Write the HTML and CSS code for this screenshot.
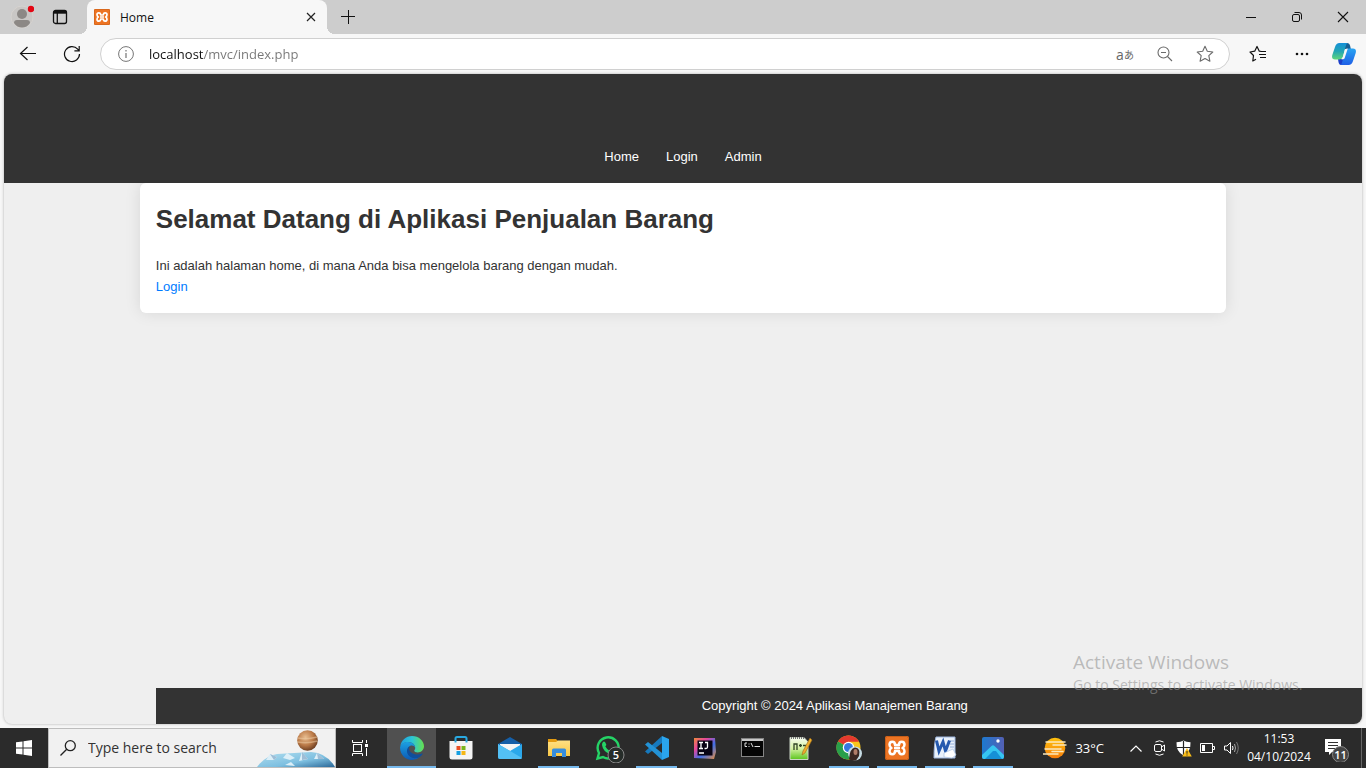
FILE: index.html
```html
<!DOCTYPE html>
<html lang="id">
<head>
<meta charset="utf-8">
<meta name="viewport" content="width=device-width, initial-scale=1">
<title>Home</title>
<link rel="stylesheet" href="styles.css">
</head>
<body>
<svg class="defs" aria-hidden="true">
  <defs>
    <linearGradient id="edgeTop" x1="0" y1="0" x2="1" y2="0"><stop offset="0" stop-color="#1f9fe0"/><stop offset=".5" stop-color="#2cc5d6"/><stop offset="1" stop-color="#66e04e"/></linearGradient>
    <linearGradient id="edgeBlue" x1="0" y1="0" x2="0" y2="1"><stop offset="0" stop-color="#1ba0e2"/><stop offset="1" stop-color="#0d5ab5"/></linearGradient>
    <linearGradient id="copA" x1="0" y1="0" x2="0" y2="1"><stop offset="0" stop-color="#1590d8"/><stop offset=".5" stop-color="#22a5b4"/><stop offset="1" stop-color="#5fd67a"/></linearGradient>
    <linearGradient id="copB" x1="0" y1="0" x2="0" y2="1"><stop offset="0" stop-color="#28a4f2"/><stop offset="1" stop-color="#1f5fe6"/></linearGradient>
    <radialGradient id="planet" cx=".4" cy=".35" r=".7"><stop offset="0" stop-color="#e8bd90"/><stop offset=".55" stop-color="#bb7a48"/><stop offset="1" stop-color="#63371d"/></radialGradient>
    <linearGradient id="ice" x1="0" y1="0" x2="1" y2="1"><stop offset="0" stop-color="#b4e0f0"/><stop offset=".6" stop-color="#7dbfe0"/><stop offset="1" stop-color="#2a6797"/></linearGradient>
    <linearGradient id="ij" x1="0" y1="0" x2="1" y2="1"><stop offset="0" stop-color="#f08a3c"/><stop offset=".3" stop-color="#e6479c"/><stop offset=".6" stop-color="#3f6fe8"/><stop offset="1" stop-color="#e88d3d"/></linearGradient>
    <linearGradient id="sun" x1="0" y1="0" x2="0" y2="1"><stop offset="0" stop-color="#ffc20e"/><stop offset="1" stop-color="#f57c0a"/></linearGradient>
    <linearGradient id="photo" x1="0" y1="0" x2="1" y2="0"><stop offset="0" stop-color="#1d79cf"/><stop offset="1" stop-color="#5360b4"/></linearGradient>
    <linearGradient id="npp" x1="0" y1="0" x2="0" y2="1"><stop offset="0" stop-color="#f8fcf2"/><stop offset=".5" stop-color="#d4f2a2"/><stop offset="1" stop-color="#5cc51e"/></linearGradient>
    <linearGradient id="folder" x1="0" y1="0" x2="0" y2="1"><stop offset="0" stop-color="#ffe083"/><stop offset="1" stop-color="#f9c846"/></linearGradient>
    <symbol id="xampp" viewBox="0 0 24 24">
      <rect width="24" height="24" rx="2" fill="#ed7423"/><rect x=".5" y=".5" width="23" height="23" rx="2" fill="none" stroke="#c95f18"/>
      <path d="M12 9H10Q10 5.800 7.300 5.800Q4.500 5.800 4.500 8.800Q4.500 11 6.500 12Q4.500 13 4.500 15.200Q4.500 18.200 7.300 18.200Q10 18.200 10 15H14Q14 18.200 16.700 18.200Q19.500 18.200 19.500 15.200Q19.500 13 17.500 12Q19.500 11 19.500 8.800Q19.500 5.800 16.700 5.800Q14 5.800 14 9ZM9 12H15" fill="none" stroke="#fff" stroke-width="2.500" stroke-linejoin="round"/>
    </symbol>
  </defs>
</svg>

<div class="tabstrip">
  <button class="profile" aria-label="Profile">
    <svg width="24" height="24" viewBox="0 0 24 24"><circle cx="12" cy="12" r="11" fill="#c9c7c5" stroke="#d6d3d0"/><circle cx="12" cy="9" r="5" fill="#8c8885"/><path d="M4 18Q4 15 7 15H17Q20 15 20 18Q17 22.500 12 22.500T4 18Z" fill="#8c8885"/><circle cx="21" cy="4" r="3.200" fill="#e30613"/></svg>
  </button>
  <button class="tab-menu" aria-label="Tab actions">
    <svg width="16" height="16" viewBox="0 0 16 16" fill="none" stroke="#111" stroke-width="1.300"><rect x="1.500" y="1.500" width="13" height="13" rx="2"/><path d="M1.500 3.300H14.500" stroke-width="2.800"/><path d="M5.300 4V14.500"/></svg>
  </button>
  <div class="tab">
    <svg width="16" height="16"><use href="#xampp"/></svg>
    <span class="tab-title">Home</span>
    <button class="tab-close" aria-label="Close tab"><svg width="10" height="10" viewBox="0 0 10 10"><path d="M1 1L9 9M9 1L1 9" stroke="#222" stroke-width="1.200"/></svg></button>
  </div>
  <button class="new-tab" aria-label="New tab"><svg width="14" height="14" viewBox="0 0 14 14"><path d="M0 6.500H14M7.500 0V14" stroke="#111"/></svg></button>
  <div class="window-buttons">
    <button aria-label="Minimize"><svg width="10" height="10" viewBox="0 0 10 10"><path d="M0 5.500H10" stroke="#111"/></svg></button>
    <button aria-label="Restore"><svg width="10" height="10" viewBox="0 0 10 10" fill="none" stroke="#111"><rect x=".5" y="2.500" width="7" height="7" rx="1.500"/><path d="M2.500 .5H7Q9.500 .5 9.500 3V7.500"/></svg></button>
    <button aria-label="Close"><svg width="12" height="12" viewBox="0 0 12 12"><path d="M1 1L11 11M11 1L1 11" stroke="#111" stroke-width="1.100"/></svg></button>
  </div>
</div>

<div class="toolbar">
  <button aria-label="Back"><svg width="18" height="16" viewBox="0 0 18 16" fill="none" stroke="#111" stroke-width="1.200"><path d="M17 7.500H1.500M8.500 1L1.500 7.500L8.500 14"/></svg></button>
  <button aria-label="Refresh"><svg width="18" height="18" viewBox="0 0 18 18" fill="none" stroke="#111" stroke-width="1.200"><path d="M16.500 9A7.500 7.500 0 1 1 14.700 4.200L16 5.600M16.200 1V5.800H11.400"/></svg></button>
  <form class="address">
    <svg width="16" height="16" viewBox="0 0 16 16" fill="none" stroke="#757575"><circle cx="8" cy="8" r="7.400"/><path d="M8 7V12M8 4V5.500" stroke-width="1.200"/></svg>
    <input class="url" type="text" aria-label="Address" value="localhost/mvc/index.php">
    <button type="button" class="translate" aria-label="Translate">a<span>あ</span></button>
    <button type="button" aria-label="Zoom out"><svg width="16" height="16" viewBox="0 0 16 16" fill="none" stroke="#6b6b6b" stroke-width="1.100"><circle cx="6.500" cy="6.500" r="5.500"/><path d="M10.500 10.500L15 15M4 6.500H9"/></svg></button>
    <button type="button" aria-label="Add to favorites"><svg width="18" height="18" viewBox="0 0 18 18" fill="none" stroke="#6b6b6b" stroke-width="1.100" stroke-linejoin="round"><path d="M9 1.300L11.300 6.300L16.800 7L12.800 10.700L13.900 16.200L9 13.500L4.100 16.200L5.200 10.700L1.200 7L6.700 6.300Z"/></svg></button>
  </form>
  <button aria-label="Favorites"><svg width="18" height="18" viewBox="0 0 18 18" fill="none" stroke="#111" stroke-width="1.200" stroke-linejoin="round"><path d="M12.500 6.500L10.300 6.200L8 1.500L5.700 6.200L1 7L4.500 10.500L3.800 16L7 14.300M11 6.500H17M10 9.500H17M11 12.500H17"/></svg></button>
  <button aria-label="Settings and more"><svg width="14" height="4" viewBox="0 0 14 4" fill="#111"><circle cx="2" cy="2" r="1.300"/><circle cx="7" cy="2" r="1.300"/><circle cx="12" cy="2" r="1.300"/></svg></button>
  <button class="copilot" aria-label="Copilot"><svg width="24" height="24" viewBox="0 0 24 24"><path d="M8 1H15Q17.500 1 18.200 4L18.800 7H12Z" fill="#175f94"/><path d="M6 17H12L16 23H9Q7 23 6.500 20Z" fill="#1c3fc9"/><path d="M7.500 1H15.500Q14.300 1.500 13.500 5L11 14.500Q10 17.500 7 17.500H3Q-.8 17.500 .3 13L3 5Q4.200 1 7.500 1Z" fill="url(#copA)"/><path d="M16.500 23H8.500Q9.700 22.500 10.500 19L13 9.500Q14 6.500 17 6.500H21Q24.800 6.500 23.700 11L21 19Q19.800 23 16.500 23Z" fill="url(#copB)"/><path d="M13 7.500Q14 6.500 15.800 6.500L12.500 16.500Q11.500 17.500 9 17.500Q10.500 17 11 14.500Z" fill="#f7f7f7"/></svg></button>
</div>

<div class="viewport">
  <header class="site-header">
    <nav class="site-nav"><a href="#home">Home</a><a href="#login">Login</a><a href="#admin">Admin</a></nav>
  </header>
  <main class="card">
    <h1>Selamat Datang di Aplikasi Penjualan Barang</h1>
    <p>Ini adalah halaman home, di mana Anda bisa mengelola barang dengan mudah.</p>
    <a href="#login">Login</a>
  </main>
  <footer class="site-footer">Copyright © 2024 Aplikasi Manajemen Barang</footer>
</div>

<div class="taskbar">
  <button class="start" aria-label="Start"><svg width="16" height="16" viewBox="0 0 16 16" fill="#fff"><path d="M0 2.300L6.500 1.400V7.500H0ZM7.500 1.200L16 0V7.500H7.500ZM0 8.500H6.500V14.600L0 13.700ZM7.500 8.500H16V16L7.500 14.800Z"/></svg></button>
  <label class="search">
    <svg width="16" height="16" viewBox="0 0 16 16" fill="none" stroke="#222" stroke-width="1.300"><circle cx="10.300" cy="5.700" r="5"/><path d="M6.700 9.300L.5 15.500"/></svg>
    <input type="search" aria-label="Search" placeholder="Type here to search">
    <svg class="highlight" width="78" height="38" viewBox="0 0 78 38"><path d="M0 38Q8 27 20 25L54 23Q70 24 78 38Z" fill="url(#ice)"/><path d="M9 31L13 25L20 28L17 31ZM26 29L30 24L38 29L33 31ZM42 32L45 23L51 30ZM57 30L60 24L67 30ZM28 36L34 33L38 37Z" fill="#dceff8"/><path d="M13 25L20 28L17 31ZM45 23L51 30L45 31ZM60 24L67 30L61 30Z" fill="#9dbdd6"/><circle cx="50.500" cy="11.500" r="10.300" fill="url(#planet)"/><path d="M41 9Q50 11 60 8M40.500 13Q50 15 60.500 12" fill="none" stroke="#f0cfa8" stroke-width="1.500" opacity=".5"/></svg>
  </label>
  <button class="start" aria-label="Task view"><svg width="16" height="16" viewBox="0 0 16 16" fill="none" stroke="#fff"><path d="M.5 0V2.500H10.500V0M.5 16V13.500H10.500V16M14.500 0V3M14.500 8V16"/><rect x="1.500" y="4.500" width="8" height="7"/><rect x="13" y="4" width="3" height="3" fill="#fff" stroke="none"/></svg></button>
  <div class="apps">
    <button class="active" aria-label="Microsoft Edge"><svg width="24" height="24" viewBox="0 0 24 24"><path d="M.3 10.500C1 4.500 6 0 12 0C19 0 24 5 24 10.300C24 14 21 16.400 17.800 16.400C15.600 16.400 14.200 15.500 14.200 14.700C14.200 14 15.200 13.600 15.200 11.900C15.200 9 12.400 6 8 6C4 6 1.200 8.500 .3 10.500Z" fill="url(#edgeTop)"/><path d="M.1 11C1 8 4 6 8 6C12.400 6 15.200 9 15.200 11.900C14.500 9.800 12 9 10 10C6 12 7 21 15 22Q17 22.300 20 21Q16.500 24 12 24C5 24-.3 18 .1 11Z" fill="url(#edgeBlue)"/><path d="M10 10C4.500 12.500 6.500 22 15 22.300C18.500 22.200 21.300 20.300 22.600 18C22.800 17.500 22.400 17.200 22 17.400C16 20.300 9.500 17 9 13Q8.900 11 10 10Z" fill="#104f9c"/></svg></button>
    <button aria-label="Microsoft Store"><svg width="24" height="24" viewBox="0 0 24 24"><path d="M.5 5H23.500V21Q23.500 23.500 21 23.500H3Q.5 23.500 .5 21Z" fill="#f4f4f4"/><path d="M6.500 6.500V2.500Q6.500 1 8 1H16Q17.500 1 17.500 2.500V6.500" fill="none" stroke="#29a9e1" stroke-width="2"/><path d="M7.500 10H11.500V14H7.500Z" fill="#e84e25"/><path d="M12.500 10H16.500V14H12.500Z" fill="#79b51c"/><path d="M7.500 15H11.500V19H7.500Z" fill="#159fe1"/><path d="M12.500 15H16.500V19H12.500Z" fill="#f5b715"/></svg></button>
    <button aria-label="Mail"><svg width="24" height="24" viewBox="0 0 24 24"><path d="M0 8L12 1L24 8V15H0Z" fill="#155fa8"/><path d="M2 8H22V17H2Z" fill="#f5f5f5"/><path d="M0 8L12 15L24 8V21Q24 23 22 23H2Q0 23 0 21Z" fill="#2ba8eb"/><path d="M0 8L24 22Q23.500 23 22 23H2Q0 23 0 21Z" fill="#53c0f5"/></svg></button>
    <button class="open" aria-label="File Explorer"><svg width="24" height="24" viewBox="0 0 24 24"><path d="M1 3H9L11 5H23V8H1Z" fill="#e49b11"/><path d="M1 6H9L11 4.500H23V20H1Z" fill="url(#folder)"/><path d="M5 21V14Q5 12.500 6.500 12.500H17.500Q19 12.500 19 14V21H15V17H9V21Z" fill="#378ddd"/></svg></button>
    <button aria-label="WhatsApp"><svg width="34" height="30" viewBox="0 0 34 30"><g transform="translate(5 3)"><path d="M1.500 22.500L3 17A10.500 10.500 0 1 1 7 21Z" fill="none" stroke="#25d366" stroke-width="2.400"/><path d="M7 6Q8 5 9 6L10.300 8.500Q10.300 9.500 9.300 10.300Q11 14 14 15L15.500 13.200Q19 14 19 15.300Q18 19 14.500 18Q7 16 6 9Q6 7 7 6Z" fill="#25d366"/></g><circle cx="25" cy="22" r="8" fill="#262c29" stroke="#888"/><text x="25" y="26" class="badge">5</text></svg></button>
    <button class="open" aria-label="Visual Studio Code"><svg width="24" height="24" viewBox="0 0 24 24"><path d="M17 0L24 3V21L17 24Z" fill="#2aa5ed"/><path d="M17 0V7L3 18L0 15.500Z" fill="#1679bd"/><path d="M17 24V17L3 6L0 8.500Z" fill="#2392d5"/></svg></button>
    <button aria-label="IntelliJ IDEA"><svg width="22" height="22" viewBox="0 0 22 22"><path d="M0 1H21L22 15L20 22L0 21Z" fill="url(#ij)"/><rect x="3.500" y="3.500" width="15" height="15" fill="#080414"/><path d="M5 5.500H9M7 5.500V11.500M5 11.500H9M11 5.500H13.500V10Q13.500 11.500 12 11.500H10.500M5 16H10" fill="none" stroke="#fff" stroke-width="1.300"/></svg></button>
    <button aria-label="Command Prompt"><svg width="24" height="24" viewBox="0 0 24 24"><rect x=".5" y="2.500" width="22" height="18" fill="#050505" stroke="#858585"/><path d="M1 4H22" stroke="#c8c8c8" stroke-width="2"/><path d="M6 7H4V10.500H6M8 7.500V8.500M8 10V11M10 7L12 11M13.500 10.500H19" fill="none" stroke="#ddd"/></svg></button>
    <button aria-label="Notepad++"><svg width="24" height="24" viewBox="0 0 24 24"><path d="M1 1.500H15L19 6V23.500H1Z" fill="url(#npp)" stroke="#cbd5c6"/><path d="M2 2H15" stroke="#777" stroke-width="2" stroke-dasharray="1 1"/><path d="M5 14V8H8V14M10 9.500H13M11.500 8V11M14 9.500H17" fill="none" stroke="#304426" stroke-width="1.300"/><path d="M21 2L23 4L16 17L13 19L14 15Z" fill="#efad2b" stroke="#9d6b17" stroke-width=".6"/></svg></button>
    <button class="open" aria-label="Google Chrome"><svg width="26" height="26" viewBox="0 0 26 26"><circle cx="12.500" cy="12.500" r="12" fill="#f8c51c"/><path d="M12.500 12.500L2 6.500A12 12 0 0 1 23 6.800H12.500Z" fill="#e5392e"/><path d="M12.500 12.500L2 6.500A12 12 0 0 0 12.500 24.500L17.600 15.500Z" fill="#299f4b"/><circle cx="12.500" cy="12.500" r="5.700" fill="#fff"/><circle cx="12.500" cy="12.500" r="4.500" fill="#3678df"/><circle cx="19" cy="18.500" r="7" fill="#c6dbe3"/><path d="M13 24Q14 13 19 12.500Q25 13 23 21L20 25.500Q15 26 13 24Z" fill="#3b2722"/><ellipse cx="19.500" cy="17" rx="2" ry="3" fill="#b07c68"/></svg></button>
    <button class="open" aria-label="XAMPP"><svg width="24" height="24"><use href="#xampp"/></svg></button>
    <button class="open" aria-label="Word"><svg width="24" height="24" viewBox="0 0 24 24"><path d="M3 1H22V22H1Q1 8 3 1Z" fill="#e9f1fb" stroke="#9fb7df"/><path d="M17 5H21M17 8H21M17 11H21" stroke="#91acd9"/><path d="M3.500 4.500L6 15L10 6L12.500 15L16.500 4.500" fill="none" stroke="#2459af" stroke-width="3"/><path d="M11 17L20 13L23 19L19 22L11 21Z" fill="#fff" stroke="#a9c2e3" stroke-width=".7"/></svg></button>
    <button class="open" aria-label="Photos"><svg width="22" height="22" viewBox="0 0 22 22"><rect width="22" height="22" rx="2" fill="url(#photo)"/><path d="M0 18L9.500 9Q11 7.500 12.500 9L22 18V20Q22 22 20 22H2Q0 22 0 20Z" fill="#36c5f1"/><path d="M11 14L3 22H20L14 14Z" fill="#1690d6"/><circle cx="16" cy="4" r="1.700" fill="#fff"/></svg></button>
  </div>
  <div class="tray">
    <button class="weather"><svg width="24" height="22" viewBox="0 0 24 22"><circle cx="12" cy="11" r="10.300" fill="url(#sun)"/><path d="M3 5H22M10 8H23M2 12H18M0 17H15M9 14.500H20" stroke="#fbe9bd" stroke-width="1.500" stroke-linecap="round"/></svg><span>33°C</span></button>
    <div class="status">
      <button aria-label="Show hidden icons"><svg width="12" height="7" viewBox="0 0 12 7"><path d="M.5 6.500L6 1L11.500 6.500" fill="none" stroke="#fff" stroke-width="1.200"/></svg></button>
      <button aria-label="Meet now"><svg width="12" height="16" viewBox="0 0 12 16" fill="none" stroke="#fff"><rect x=".5" y="4.500" width="7" height="7" rx="1.500"/><path d="M7.500 7L10.500 5V11L7.500 9M1.500 2Q5.500-.5 9.500 2M1.500 14Q5.500 16.500 9.500 14"/></svg></button>
      <button aria-label="Security"><svg width="16" height="17" viewBox="0 0 16 17"><path d="M7.500 .5Q10 2.300 14.500 2.300Q15 12 7.500 15.500Q0 12 .5 2.300Q5 2.300 7.500 .5Z" fill="#fff"/><path d="M7.500 1V15M.5 7.500H14.500" stroke="#242424" stroke-width="1.200"/><path d="M11 8L15.800 16.500H6.200Z" fill="#f9bd18"/><path d="M11 11V13.700M11 14.500V15.500" stroke="#222"/></svg></button>
      <button aria-label="Battery"><svg width="16" height="10" viewBox="0 0 16 10"><path d="M.5 .5H12.500V9.500H.5ZM13 3.500H14.500V6.500H13" fill="none" stroke="#fff"/><path d="M2 2H5V8H2Z" fill="#fff"/></svg></button>
      <button aria-label="Volume"><svg width="16" height="14" viewBox="0 0 16 14" fill="none" stroke="#fff"><path d="M.5 5H3L6.500 1.500V12.500L3 9H.5Z"/><path d="M8.500 5Q9.500 7 8.500 9"/><path d="M10.500 3Q12.500 7 10.500 11" stroke="#aaa"/><path d="M12.500 1Q16 7 12.500 13" stroke="#777"/></svg></button>
    </div>
    <button class="clock"><span>11:53</span><span>04/10/2024</span></button>
    <button class="notices" aria-label="Notifications, 11 new"><svg width="28" height="28" viewBox="0 0 28 28"><path d="M1 5H17V18H8L5 21V18H1Z" fill="#fff"/><path d="M4 8.500H14M4 11.500H14M4 14.500H11" stroke="#333"/><circle cx="16.500" cy="20.500" r="8" fill="#444" stroke="#888"/><text x="16.500" y="24.500" class="badge">11</text></svg></button>
  </div>
</div>

<div class="activation" aria-hidden="true"><strong>Activate Windows</strong><span>Go to Settings to activate Windows.</span></div>
</body>
</html>
```
FILE: styles.css
```css
* { box-sizing: border-box; }

body {
  margin: 0;
  height: 100vh;
  display: flex;
  flex-direction: column;
  overflow: hidden;
  background: #f7f7f7;
  color: #111;
  font-family: "Open Sans", "Noto Sans", sans-serif;
  font-size: 12px;
}

button {
  display: flex;
  align-items: center;
  justify-content: center;
  padding: 0;
  border: 0;
  background: none;
  color: inherit;
  font: inherit;
}

svg { display: block; flex: none; }
.defs { position: absolute; width: 0; height: 0; }

/* Browser tabs */
.tabstrip {
  display: flex;
  flex: none;
  height: 34px;
  background: #cdcdcd;
}
.profile { width: 44px; }
.tab-menu { width: 32px; }
.tab {
  position: relative;
  display: flex;
  align-items: center;
  gap: 10px;
  width: 240px;
  margin-left: 11px;
  padding: 0 11px 0 7px;
  border-radius: 8px 8px 0 0;
  background: #f7f7f7;
}
.tab::before,
.tab::after {
  content: "";
  position: absolute;
  bottom: 0;
  width: 8px;
  height: 8px;
}
.tab::before { right: 100%; background: radial-gradient(circle at 0 0, #cdcdcd 8px, #f7f7f7 8px); }
.tab::after { left: 100%; background: radial-gradient(circle at 100% 0, #cdcdcd 8px, #f7f7f7 8px); }
.tab-title { flex: 1; }
.new-tab { width: 42px; }
.window-buttons { display: flex; margin-left: auto; }
.window-buttons button { width: 46px; }

/* Address bar */
.toolbar {
  display: flex;
  align-items: center;
  flex: none;
  height: 40px;
  padding: 0 2px 0 6px;
}
.toolbar > button { width: 44px; height: 32px; }
.toolbar > .copilot { width: 40px; }
.address {
  display: flex;
  align-items: center;
  flex: 1;
  height: 32px;
  margin: 0 6px;
  padding: 0 4px 0 17px;
  border: 1px solid #d0d0d0;
  border-radius: 16px;
  background: #fff;
}
.address button { width: 40px; height: 30px; }
.url {
  flex: 1;
  min-width: 0;
  margin-left: 15px;
  padding: 0;
  border: 0;
  outline: 0;
  background: linear-gradient(90deg, #111 55px, #767676 55px);
  background-clip: text;
  -webkit-background-clip: text;
  color: transparent;
  font: 13px/20px "Open Sans", "Noto Sans", sans-serif;
}
.address .translate {
  color: #666;
  font-size: 14px;
}
.translate span { font: 10px "Noto Sans CJK JP", sans-serif; }

/* Web page */
.viewport {
  display: flex;
  flex: 1;
  flex-direction: column;
  min-height: 0;
  margin: 0 4px 4px;
  overflow: hidden;
  border-radius: 8px;
  background: #efefef;
  box-shadow: 0 0 3px rgba(0, 0, 0, .3);
  color: #333;
  font: 13px/21px "Liberation Sans", Arial, sans-serif;
}
.site-header {
  position: relative;
  padding: 72px 0 16px;
  background: #333;
}
.site-nav { display: flex; justify-content: center; gap: 27px; }
.site-nav a { color: #fff; text-decoration: none; }
.card {
  width: 80%;
  margin: 0 auto;
  padding: 16px;
  border-radius: 6px;
  background: #fff;
  box-shadow: 0 0 16px rgba(0, 0, 0, .1);
}
.card h1 { margin: 0 0 15px; font-size: 26px; line-height: 41px; }
.card p { margin: 0; }
.card a { display: block; color: #007bff; text-decoration: none; }
.site-footer {
  width: 100%;
  margin: auto 0 0 calc(10% + 16px);
  padding: 8px 0;
  background: #333;
  color: #fff;
  line-height: 20px;
  text-align: center;
}

/* Desktop taskbar */
.taskbar {
  display: flex;
  flex: none;
  height: 40px;
  background: #2b2b2b;
  color: #fff;
}
.start { width: 48px; }
.search {
  display: flex;
  align-items: center;
  width: 288px;
  padding-left: 11px;
  border: 1px solid #bdbdbd;
  background: #f1f1f1;
}
.search input {
  flex: 1;
  min-width: 0;
  margin-left: 12px;
  padding: 0;
  border: 0;
  outline: 0;
  background: none;
  font: 14px/20px "Open Sans", "Noto Sans", sans-serif;
}
.search input::placeholder { color: #333; opacity: 1; }
.apps {
  display: grid;
  grid-template-columns: repeat(6, 49px) repeat(7, 48px);
  margin-left: 3px;
}
.apps button { position: relative; }
.apps .active { background: #505050; }
.apps .active::after,
.apps .open::after {
  content: "";
  position: absolute;
  right: 4px;
  bottom: 0;
  left: 4px;
  height: 2px;
  background: #76b9ed;
}
.apps .active::after { right: 0; left: 0; }
.badge {
  fill: #fff;
  font: 600 11px "Open Sans", sans-serif;
  text-anchor: middle;
}
.tray { display: flex; margin-left: auto; }
.weather { gap: 8px; margin-right: 20px; font-size: 13px; }
.status { display: flex; }
.status button { width: 24px; }
.clock {
  flex-direction: column;
  width: 70px;
  font-size: 12px;
  line-height: 18px;
}
.notices {
  width: 48px;
  margin-right: 4px;
  border-right: 1px solid #666;
}

.activation {
  position: absolute;
  right: 56px;
  bottom: 73px;
  display: flex;
  flex-direction: column;
  width: 237px;
  color: rgba(150, 150, 150, .6);
  font-size: 14px;
  line-height: 20px;
  pointer-events: none;
}
.activation strong { font-size: 19px; font-weight: 400; line-height: 26px; }
```
